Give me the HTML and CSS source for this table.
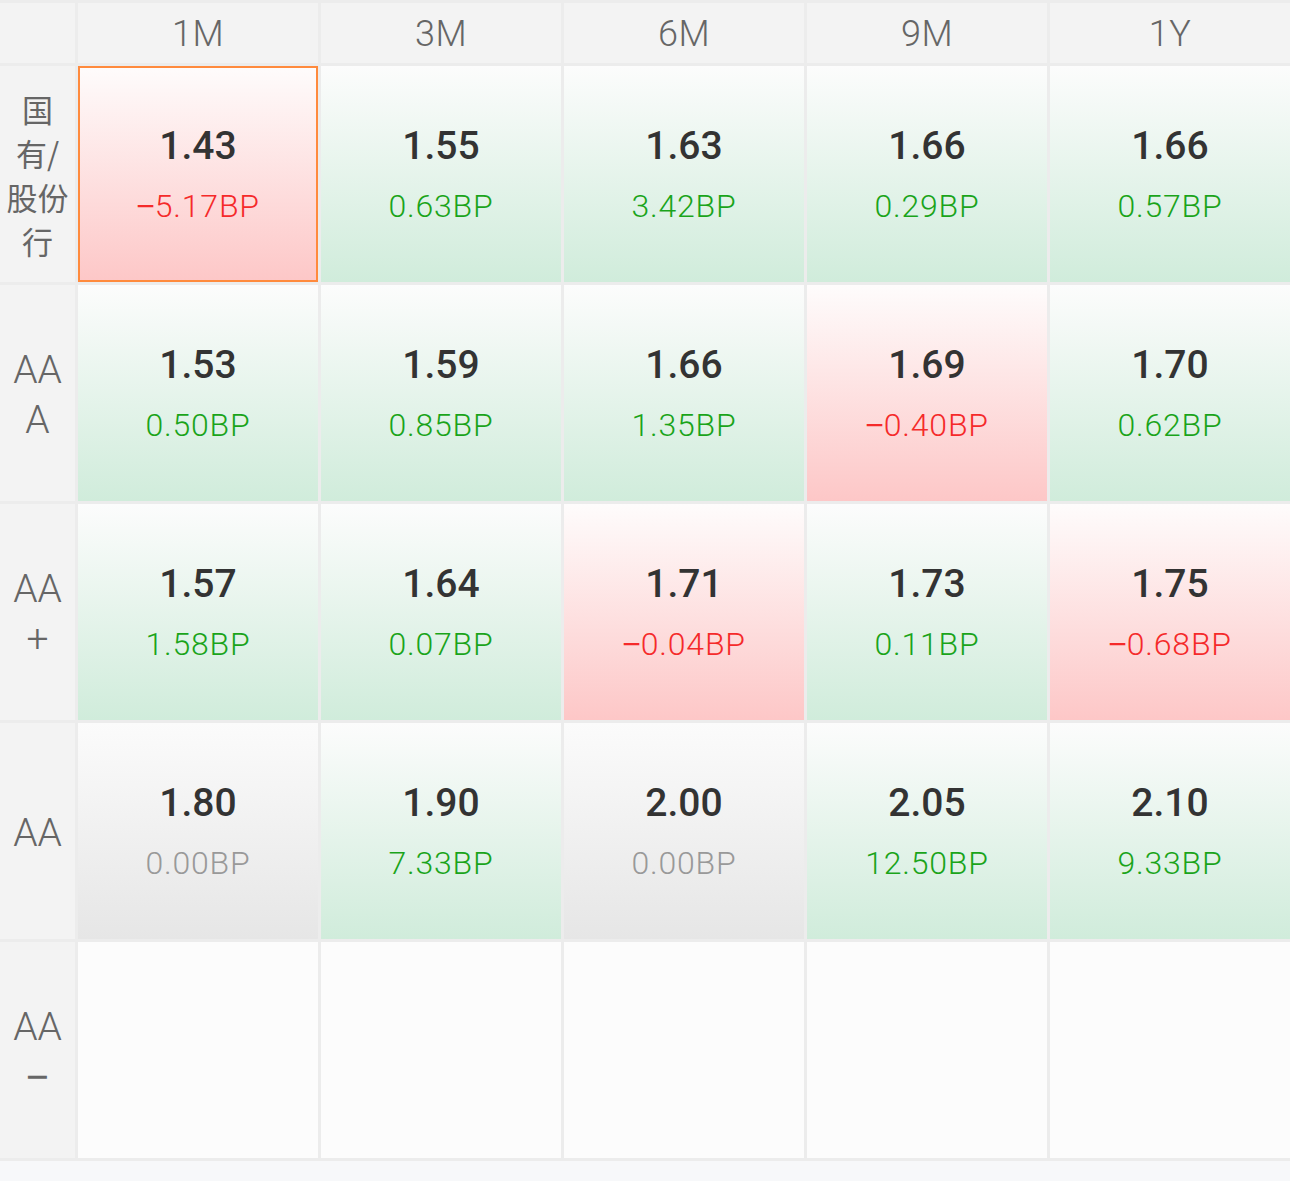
FILE: index.html
```html
<!DOCTYPE html>
<html lang="zh-CN">
<head>
<meta charset="utf-8">
<title>利率矩阵</title>
<link rel="stylesheet" href="styles.css">
</head>
<body>
<div class="matrix">
  <div class="head corner"></div>
  <div class="head">1M</div>
  <div class="head">3M</div>
  <div class="head">6M</div>
  <div class="head">9M</div>
  <div class="head">1Y</div>

  <div class="label label-cn"><div class="label-text">国<br>有/<br>股份<br>行</div></div>
  <div class="cell down selected"><div class="val">1.43</div><div class="bp red"><span class="minus">−</span>5.17BP</div></div>
  <div class="cell up"><div class="val">1.55</div><div class="bp green">0.63BP</div></div>
  <div class="cell up"><div class="val">1.63</div><div class="bp green">3.42BP</div></div>
  <div class="cell up"><div class="val">1.66</div><div class="bp green">0.29BP</div></div>
  <div class="cell up"><div class="val">1.66</div><div class="bp green">0.57BP</div></div>

  <div class="label"><div class="label-text">AA<br>A</div></div>
  <div class="cell up"><div class="val">1.53</div><div class="bp green">0.50BP</div></div>
  <div class="cell up"><div class="val">1.59</div><div class="bp green">0.85BP</div></div>
  <div class="cell up"><div class="val">1.66</div><div class="bp green">1.35BP</div></div>
  <div class="cell down"><div class="val">1.69</div><div class="bp red"><span class="minus">−</span>0.40BP</div></div>
  <div class="cell up"><div class="val">1.70</div><div class="bp green">0.62BP</div></div>

  <div class="label"><div class="label-text">AA<br>+</div></div>
  <div class="cell up"><div class="val">1.57</div><div class="bp green">1.58BP</div></div>
  <div class="cell up"><div class="val">1.64</div><div class="bp green">0.07BP</div></div>
  <div class="cell down"><div class="val">1.71</div><div class="bp red"><span class="minus">−</span>0.04BP</div></div>
  <div class="cell up"><div class="val">1.73</div><div class="bp green">0.11BP</div></div>
  <div class="cell down"><div class="val">1.75</div><div class="bp red"><span class="minus">−</span>0.68BP</div></div>

  <div class="label"><div class="label-text">AA</div></div>
  <div class="cell flat"><div class="val">1.80</div><div class="bp gray">0.00BP</div></div>
  <div class="cell up"><div class="val">1.90</div><div class="bp green">7.33BP</div></div>
  <div class="cell flat"><div class="val">2.00</div><div class="bp gray">0.00BP</div></div>
  <div class="cell up"><div class="val">2.05</div><div class="bp green">12.50BP</div></div>
  <div class="cell up"><div class="val">2.10</div><div class="bp green">9.33BP</div></div>

  <div class="label"><div class="label-text">AA<br><span class="minus">−</span></div></div>
  <div class="cell empty"></div>
  <div class="cell empty"></div>
  <div class="cell empty"></div>
  <div class="cell empty"></div>
  <div class="cell empty"></div>
</div>
<div class="footer"></div>
</body>
</html>
```

FILE: styles.css
```css
html, body {
  margin: 0;
  padding: 0;
  background: #f7f8fa;
}

body {
  font-family: Roboto, "Noto Sans CJK SC", sans-serif;
  width: 1290px;
  overflow: hidden;
}

.matrix {
  display: grid;
  grid-template-columns: 75px repeat(5, 240px);
  grid-template-rows: 60px repeat(5, 216px);
  gap: 3px;
  padding: 3px 0;
  background: #ececec;
  width: 1290px;
  overflow: hidden;
}

.head {
  background: #f3f3f3;
  color: #666;
  font-size: 36px;
  font-weight: 300;
  letter-spacing: 0.5px;
  display: flex;
  align-items: center;
  justify-content: center;
  padding-top: 2px;
}

.label {
  background: #f3f3f3;
  color: #666;
  font-size: 39px;
  line-height: 50px;
  font-weight: 300;
  display: flex;
  align-items: center;
  justify-content: center;
  text-align: center;
  padding-top: 4px;
}

.label-text {
  text-align: center;
}

.label-cn {
  font-family: "Noto Sans CJK SC", sans-serif;
  font-size: 31px;
  line-height: 44px;
  font-weight: 400;
  padding-top: 2px;
}

.minus {
  font-family: "Liberation Sans", sans-serif;
  font-weight: 400;
  letter-spacing: 0;
}

.cell {
  display: flex;
  flex-direction: column;
  align-items: center;
  justify-content: center;
  position: relative;
}

.cell.up {
  background: linear-gradient(to bottom, #fcfcfc 0%, #d0ecdb 100%);
}

.cell.down {
  background: linear-gradient(to bottom, #fefcfc 0%, #fdc7c7 100%);
}

.cell.flat {
  background: linear-gradient(to bottom, #fbfbfb 0%, #e6e6e6 100%);
}

.cell.empty {
  background: #fcfcfc;
}

.cell.selected {
  box-shadow: inset 0 0 0 2px #ff8a3d;
}

.val {
  color: #333;
  font-size: 39px;
  font-weight: 500;
  line-height: 46px;
}

.bp {
  font-size: 32px;
  font-weight: 300;
  letter-spacing: 0.8px;
  line-height: 40px;
  margin-top: 17px;
}

.green { color: #1aa41a; }
.red { color: #f52a2a; }
.gray { color: #999; }

.footer {
  height: 20px;
  background: #f7f8fa;
}
```
